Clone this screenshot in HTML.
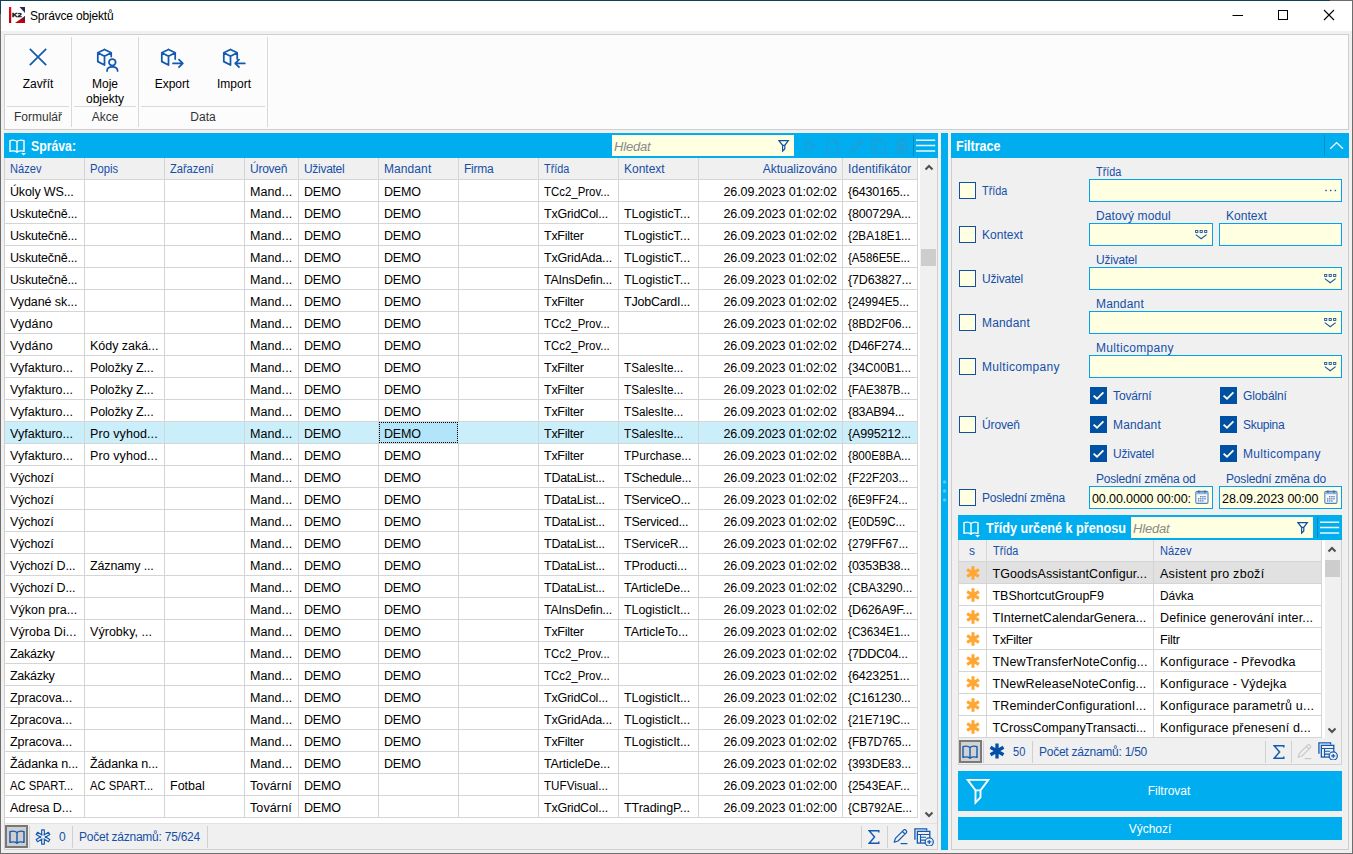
<!DOCTYPE html>
<html lang="cs"><head><meta charset="utf-8"><title>Správce objektů</title><style>
html,body{margin:0;padding:0;}
body{width:1353px;height:854px;overflow:hidden;position:relative;background:#f0f0f0;font-family:"Liberation Sans",sans-serif;font-size:12px;}
div,span,svg{position:absolute;}
.t{white-space:pre;}
</style></head><body>
<div style="left:0px;top:0px;width:1353px;height:31px;background:#fff;"></div>
<div style="left:0px;top:0px;width:1330px;height:1px;background:#0f4258;"></div>
<div style="left:1330px;top:0px;width:23px;height:1px;background:#6d6d6d;"></div>
<div style="left:0px;top:0px;width:1px;height:14px;background:#0f4258;"></div>
<div style="left:0px;top:14px;width:1px;height:840px;background:#6d6d6d;"></div>
<div style="left:1352px;top:1px;width:1px;height:853px;background:#6d6d6d;"></div>
<div style="left:0px;top:853px;width:1353px;height:1px;background:#6d6d6d;"></div>
<svg style="left:9px;top:7px;" width="16" height="16" viewBox="0 0 16 16">
<defs><linearGradient id="g1" x1="0" y1="0" x2="0" y2="1"><stop offset="0" stop-color="#ff0018"/><stop offset="1" stop-color="#b00010"/></linearGradient></defs>
<rect x="0" y="0" width="16" height="16" fill="#fff"/>
<rect x="0" y="0" width="2.2" height="16" fill="url(#g1)"/>
<polygon points="10.5,0 16,0 16,6" fill="#2a2a55"/>
<polygon points="16,9 16,16 6,16" fill="#c4000f"/>
<polygon points="16,9 16,13 12,13" fill="#3a2a50"/>
<text x="3.1" y="10.1" font-family="Liberation Sans" font-weight="bold" font-size="6.2" fill="#111" stroke="#111" stroke-width="0.35" textLength="9.8" lengthAdjust="spacingAndGlyphs">K2</text>
</svg>
<span class="t" style="top:9px;line-height:14px;font-size:12px;color:#000;letter-spacing:-0.171px;left:30px;">Správce objektů</span>
<svg style="left:1232px;top:9px;" width="12" height="12" viewBox="0 0 12 12"><path d="M0.5 6.5H11" stroke="#000" stroke-width="1" fill="none"/></svg>
<svg style="left:1277px;top:9px;" width="12" height="12" viewBox="0 0 12 12"><rect x="1.5" y="1.5" width="9" height="9" stroke="#000" stroke-width="1" fill="none"/></svg>
<svg style="left:1323px;top:9px;" width="12" height="12" viewBox="0 0 12 12"><path d="M1 1L11 11M11 1L1 11" stroke="#000" stroke-width="1.1" fill="none"/></svg>
<div style="left:4px;top:34px;width:1345px;height:96px;background:#fcfcfc;border:1px solid #cfcfcf;box-sizing:border-box;"></div>
<div style="left:71px;top:37px;width:1px;height:90px;background:#d9d9d9;"></div>
<div style="left:138px;top:37px;width:1px;height:90px;background:#d9d9d9;"></div>
<div style="left:267px;top:37px;width:1px;height:90px;background:#d9d9d9;"></div>
<div style="left:7px;top:106px;width:62px;height:1px;background:#d9d9d9;"></div>
<div style="left:74px;top:106px;width:62px;height:1px;background:#d9d9d9;"></div>
<div style="left:141px;top:106px;width:124px;height:1px;background:#d9d9d9;"></div>
<span class="t" style="top:110px;line-height:14px;font-size:12px;color:#333;left:-112px;width:300px;text-align:center;">Formulář</span>
<span class="t" style="top:110px;line-height:14px;font-size:12px;color:#333;left:-45px;width:300px;text-align:center;">Akce</span>
<span class="t" style="top:110px;line-height:14px;font-size:12px;color:#333;left:53px;width:300px;text-align:center;">Data</span>
<span class="t" style="top:77px;line-height:14px;font-size:12px;color:#000;left:-112px;width:300px;text-align:center;">Zavřít</span>
<span class="t" style="top:77px;line-height:14px;font-size:12px;color:#000;left:-45px;width:300px;text-align:center;">Moje</span>
<span class="t" style="top:92px;line-height:14px;font-size:12px;color:#000;left:-45px;width:300px;text-align:center;">objekty</span>
<span class="t" style="top:77px;line-height:14px;font-size:12px;color:#000;left:22px;width:300px;text-align:center;">Export</span>
<span class="t" style="top:77px;line-height:14px;font-size:12px;color:#000;left:84px;width:300px;text-align:center;">Import</span>
<svg style="left:27.6px;top:46.5px;" width="20" height="20" viewBox="0 0 20 20"><path d="M1.8 1.8L18.2 18.2M18.2 1.8L1.8 18.2" stroke="#1259b0" stroke-width="1.7" fill="none"/></svg>
<svg style="left:96.4px;top:47.5px;" width="24" height="24" viewBox="0 0 24 24"><g stroke="#1259b0" stroke-width="1.75" fill="none" stroke-linejoin="round" stroke-linecap="round"><path d="M8.5 1.5L15.2 4.8V8.5 M8.5 1.5L1.8 4.8V13.6L8.5 17 M1.8 4.8L8.5 8.2L15.2 4.8 M8.5 8.2V17"/><circle cx="16.3" cy="14.3" r="3.3"/><path d="M11 23C11.2 17.6 21.4 17.6 21.6 23"/></g></svg>
<svg style="left:159.5px;top:47.6px;" width="26" height="24" viewBox="0 0 26 24"><g stroke="#1259b0" stroke-width="1.75" fill="none" stroke-linejoin="round" stroke-linecap="round"><path d="M8.5 1.5L15.2 4.8V11 M8.5 1.5L1.8 4.8V13.6L8.5 17 M1.8 4.8L8.5 8.2L15.2 4.8 M8.5 8.2V17"/><path d="M13 15.4H22.6 M19 11.6L22.8 15.4L19 19.2"/></g></svg>
<svg style="left:221.5px;top:47.6px;" width="26" height="24" viewBox="0 0 26 24"><g stroke="#1259b0" stroke-width="1.75" fill="none" stroke-linejoin="round" stroke-linecap="round"><path d="M8.5 1.5L15.2 4.8V11 M8.5 1.5L1.8 4.8V13.6L8.5 17 M1.8 4.8L8.5 8.2L15.2 4.8 M8.5 8.2V17"/><path d="M13.2 15.4H22.8 M17 11.6L13.2 15.4L17 19.2"/></g></svg>
<div style="left:4px;top:133px;width:934px;height:717px;background:#fff;border:1px solid #d0d0d0;border-top:none;box-sizing:border-box;"></div>
<div style="left:4px;top:133px;width:934px;height:25px;background:#00adee;"></div>
<svg style="left:9px;top:139px;" width="18" height="18" viewBox="0 0 18 18"><g stroke="#fff" stroke-width="1.4" fill="none" stroke-linejoin="round"><path d="M8 2.6C6.5 1.2 3 1 1 1.6V12.4C3 11.8 6.5 12 8 13.2C9.5 12 13 11.8 15 12.4V1.6C13 1 9.5 1.2 8 2.6V13.2"/></g><path d="M12.2 14L17 14L14.6 16.4Z" fill="#fff"/></svg>
<span class="t" style="top:138px;line-height:16px;font-size:14px;color:#fff;font-weight:bold;transform:scaleX(0.8762);transform-origin:0 0;left:31px;">Správa:</span>
<div style="left:612px;top:135px;width:182px;height:21px;background:#ffffe1;"></div>
<span class="t" style="top:139px;line-height:15px;font-size:13px;color:#8a8a8a;font-style:italic;letter-spacing:-0.196px;left:614px;">Hledat</span>
<svg style="left:778px;top:139px;" width="12" height="14" viewBox="0 0 12 14"><path d="M0.9 1.7H10.3L6.8 6.3V10L4.6 12.1V6.3Z M4.6 6.3H6.8" stroke="#0f50a8" stroke-width="1.2" fill="none" stroke-linejoin="miter"/></svg>
<svg style="left:804px;top:138px;" width="14" height="16" viewBox="0 0 14 16"><path d="M1.8 2.2L10.6 7.8L1.8 13.4Z" stroke="#239cd3" stroke-width="1.2" fill="none"/></svg>
<svg style="left:826px;top:138px;" width="14" height="16" viewBox="0 0 14 16"><path d="M1.5 1.5H8.5L12 5V14.5H1.5Z M8.5 1.5V5H12" stroke="#239cd3" stroke-width="1.2" fill="none"/></svg>
<svg style="left:848px;top:138px;" width="16" height="16" viewBox="0 0 16 16"><path d="M2 14L3 10.5L11.5 2L14 4.5L5.5 13Z M10 3.5L12.5 6" stroke="#239cd3" stroke-width="1.2" fill="none"/></svg>
<svg style="left:870px;top:137px;" width="16" height="18" viewBox="0 0 16 18"><path d="M1.5 1.5H10V3.5 M1.5 1.5V13H5 M5.5 4H14.5V16.5H5.5Z" stroke="#239cd3" stroke-width="1.2" fill="none"/></svg>
<svg style="left:895px;top:137px;" width="14" height="18" viewBox="0 0 14 18"><path d="M1 4H13 M5 4V2H9V4 M2.2 4V16.5H11.8V4 M5.2 7V14 M7 7V14 M8.8 7V14" stroke="#239cd3" stroke-width="1.2" fill="none"/></svg>
<div style="left:913px;top:135px;width:1px;height:21px;background:#0a86bd;"></div>
<svg style="left:916px;top:139px;" width="20" height="14" viewBox="0 0 20 14"><path d="M0 1.3H19.2M0 6.6H19.2M0 11.9H19.2" stroke="#fff" stroke-opacity="0.92" stroke-width="1.5" fill="none"/></svg>
<div style="left:5px;top:158px;width:913px;height:21px;background:#f0f0f0;"></div>
<span class="t" style="top:162px;line-height:14px;font-size:12px;color:#154fa6;transform:scaleX(0.9260);transform-origin:0 0;left:10px;">Název</span>
<span class="t" style="top:162px;line-height:14px;font-size:12px;color:#154fa6;transform:scaleX(0.9357);transform-origin:0 0;left:90px;">Popis</span>
<span class="t" style="top:162px;line-height:14px;font-size:12px;color:#154fa6;transform:scaleX(0.9227);transform-origin:0 0;left:170px;">Zařazení</span>
<span class="t" style="top:162px;line-height:14px;font-size:12px;color:#154fa6;letter-spacing:-0.248px;left:250px;">Úroveň</span>
<span class="t" style="top:162px;line-height:14px;font-size:12px;color:#154fa6;letter-spacing:-0.298px;left:304px;">Uživatel</span>
<span class="t" style="top:162px;line-height:14px;font-size:12px;color:#154fa6;letter-spacing:0.085px;left:384px;">Mandant</span>
<span class="t" style="top:162px;line-height:14px;font-size:12px;color:#154fa6;letter-spacing:-0.274px;left:464px;">Firma</span>
<span class="t" style="top:162px;line-height:14px;font-size:12px;color:#154fa6;transform:scaleX(0.9066);transform-origin:0 0;left:544px;">Třída</span>
<span class="t" style="top:162px;line-height:14px;font-size:12px;color:#154fa6;letter-spacing:-0.015px;left:624px;">Kontext</span>
<span class="t" style="top:162px;line-height:14px;font-size:12px;color:#154fa6;letter-spacing:-0.040px;right:516px;">Aktualizováno</span>
<span class="t" style="top:162px;line-height:14px;font-size:12px;color:#154fa6;letter-spacing:0.104px;left:848px;">Identifikátor</span>
<div style="left:5px;top:422px;width:913px;height:21px;background:#cbeefb;"></div>
<div style="left:379px;top:422px;width:79px;height:21px;background:#b2e5fa;outline:1px dotted #000;outline-offset:-1px;"></div>
<div style="left:5px;top:179px;width:913px;height:1px;background:#d5d5d5;"></div>
<div style="left:5px;top:201px;width:913px;height:1px;background:#d5d5d5;"></div>
<div style="left:5px;top:223px;width:913px;height:1px;background:#d5d5d5;"></div>
<div style="left:5px;top:245px;width:913px;height:1px;background:#d5d5d5;"></div>
<div style="left:5px;top:267px;width:913px;height:1px;background:#d5d5d5;"></div>
<div style="left:5px;top:289px;width:913px;height:1px;background:#d5d5d5;"></div>
<div style="left:5px;top:311px;width:913px;height:1px;background:#d5d5d5;"></div>
<div style="left:5px;top:333px;width:913px;height:1px;background:#d5d5d5;"></div>
<div style="left:5px;top:355px;width:913px;height:1px;background:#d5d5d5;"></div>
<div style="left:5px;top:377px;width:913px;height:1px;background:#d5d5d5;"></div>
<div style="left:5px;top:399px;width:913px;height:1px;background:#d5d5d5;"></div>
<div style="left:5px;top:421px;width:913px;height:1px;background:#d5d5d5;"></div>
<div style="left:5px;top:443px;width:913px;height:1px;background:#d5d5d5;"></div>
<div style="left:5px;top:465px;width:913px;height:1px;background:#d5d5d5;"></div>
<div style="left:5px;top:487px;width:913px;height:1px;background:#d5d5d5;"></div>
<div style="left:5px;top:509px;width:913px;height:1px;background:#d5d5d5;"></div>
<div style="left:5px;top:531px;width:913px;height:1px;background:#d5d5d5;"></div>
<div style="left:5px;top:553px;width:913px;height:1px;background:#d5d5d5;"></div>
<div style="left:5px;top:575px;width:913px;height:1px;background:#d5d5d5;"></div>
<div style="left:5px;top:597px;width:913px;height:1px;background:#d5d5d5;"></div>
<div style="left:5px;top:619px;width:913px;height:1px;background:#d5d5d5;"></div>
<div style="left:5px;top:641px;width:913px;height:1px;background:#d5d5d5;"></div>
<div style="left:5px;top:663px;width:913px;height:1px;background:#d5d5d5;"></div>
<div style="left:5px;top:685px;width:913px;height:1px;background:#d5d5d5;"></div>
<div style="left:5px;top:707px;width:913px;height:1px;background:#d5d5d5;"></div>
<div style="left:5px;top:729px;width:913px;height:1px;background:#d5d5d5;"></div>
<div style="left:5px;top:751px;width:913px;height:1px;background:#d5d5d5;"></div>
<div style="left:5px;top:773px;width:913px;height:1px;background:#d5d5d5;"></div>
<div style="left:5px;top:795px;width:913px;height:1px;background:#d5d5d5;"></div>
<div style="left:5px;top:817px;width:913px;height:1px;background:#d5d5d5;"></div>
<div style="left:84px;top:158px;width:1px;height:660px;background:#d5d5d5;"></div>
<div style="left:164px;top:158px;width:1px;height:660px;background:#d5d5d5;"></div>
<div style="left:244px;top:158px;width:1px;height:660px;background:#d5d5d5;"></div>
<div style="left:298px;top:158px;width:1px;height:660px;background:#d5d5d5;"></div>
<div style="left:378px;top:158px;width:1px;height:660px;background:#d5d5d5;"></div>
<div style="left:458px;top:158px;width:1px;height:660px;background:#d5d5d5;"></div>
<div style="left:538px;top:158px;width:1px;height:660px;background:#d5d5d5;"></div>
<div style="left:618px;top:158px;width:1px;height:660px;background:#d5d5d5;"></div>
<div style="left:698px;top:158px;width:1px;height:660px;background:#d5d5d5;"></div>
<div style="left:842px;top:158px;width:1px;height:660px;background:#d5d5d5;"></div>
<div style="left:917px;top:158px;width:1px;height:660px;background:#d5d5d5;"></div>
<div style="left:458px;top:422px;width:1px;height:21px;background:#cbeefb;"></div>
<span class="t" style="top:185px;line-height:14px;font-size:12.5px;color:#000;letter-spacing:-0.154px;left:10px;">Úkoly WS...</span>
<span class="t" style="top:185px;line-height:14px;font-size:12.5px;color:#000;letter-spacing:0.087px;left:250px;">Mand...</span>
<span class="t" style="top:185px;line-height:14px;font-size:12.5px;color:#000;letter-spacing:-0.200px;left:304px;">DEMO</span>
<span class="t" style="top:185px;line-height:14px;font-size:12.5px;color:#000;letter-spacing:-0.200px;left:384px;">DEMO</span>
<span class="t" style="top:185px;line-height:14px;font-size:12.5px;color:#000;transform:scaleX(0.9137);transform-origin:0 0;left:544px;">TCc2_Prov...</span>
<span class="t" style="top:185px;line-height:14px;font-size:12.5px;color:#000;letter-spacing:-0.058px;right:516px;">26.09.2023 01:02:02</span>
<span class="t" style="top:185px;line-height:14px;font-size:12.5px;color:#000;letter-spacing:-0.165px;left:848px;">{6430165...</span>
<span class="t" style="top:207px;line-height:14px;font-size:12.5px;color:#000;letter-spacing:-0.182px;left:10px;">Uskutečně...</span>
<span class="t" style="top:207px;line-height:14px;font-size:12.5px;color:#000;letter-spacing:0.087px;left:250px;">Mand...</span>
<span class="t" style="top:207px;line-height:14px;font-size:12.5px;color:#000;letter-spacing:-0.200px;left:304px;">DEMO</span>
<span class="t" style="top:207px;line-height:14px;font-size:12.5px;color:#000;letter-spacing:-0.200px;left:384px;">DEMO</span>
<span class="t" style="top:207px;line-height:14px;font-size:12.5px;color:#000;letter-spacing:-0.232px;left:544px;">TxGridCol...</span>
<span class="t" style="top:207px;line-height:14px;font-size:12.5px;color:#000;letter-spacing:-0.045px;left:624px;">TLogisticT...</span>
<span class="t" style="top:207px;line-height:14px;font-size:12.5px;color:#000;letter-spacing:-0.058px;right:516px;">26.09.2023 01:02:02</span>
<span class="t" style="top:207px;line-height:14px;font-size:12.5px;color:#000;letter-spacing:-0.166px;left:848px;">{800729A...</span>
<span class="t" style="top:229px;line-height:14px;font-size:12.5px;color:#000;letter-spacing:-0.182px;left:10px;">Uskutečně...</span>
<span class="t" style="top:229px;line-height:14px;font-size:12.5px;color:#000;letter-spacing:0.087px;left:250px;">Mand...</span>
<span class="t" style="top:229px;line-height:14px;font-size:12.5px;color:#000;letter-spacing:-0.200px;left:304px;">DEMO</span>
<span class="t" style="top:229px;line-height:14px;font-size:12.5px;color:#000;letter-spacing:-0.200px;left:384px;">DEMO</span>
<span class="t" style="top:229px;line-height:14px;font-size:12.5px;color:#000;letter-spacing:-0.259px;left:544px;">TxFilter</span>
<span class="t" style="top:229px;line-height:14px;font-size:12.5px;color:#000;letter-spacing:-0.045px;left:624px;">TLogisticT...</span>
<span class="t" style="top:229px;line-height:14px;font-size:12.5px;color:#000;letter-spacing:-0.058px;right:516px;">26.09.2023 01:02:02</span>
<span class="t" style="top:229px;line-height:14px;font-size:12.5px;color:#000;transform:scaleX(0.9321);transform-origin:0 0;left:848px;">{2BA18E1...</span>
<span class="t" style="top:251px;line-height:14px;font-size:12.5px;color:#000;letter-spacing:-0.182px;left:10px;">Uskutečně...</span>
<span class="t" style="top:251px;line-height:14px;font-size:12.5px;color:#000;letter-spacing:0.087px;left:250px;">Mand...</span>
<span class="t" style="top:251px;line-height:14px;font-size:12.5px;color:#000;letter-spacing:-0.200px;left:304px;">DEMO</span>
<span class="t" style="top:251px;line-height:14px;font-size:12.5px;color:#000;letter-spacing:-0.200px;left:384px;">DEMO</span>
<span class="t" style="top:251px;line-height:14px;font-size:12.5px;color:#000;letter-spacing:-0.181px;left:544px;">TxGridAda...</span>
<span class="t" style="top:251px;line-height:14px;font-size:12.5px;color:#000;letter-spacing:-0.045px;left:624px;">TLogisticT...</span>
<span class="t" style="top:251px;line-height:14px;font-size:12.5px;color:#000;letter-spacing:-0.058px;right:516px;">26.09.2023 01:02:02</span>
<span class="t" style="top:251px;line-height:14px;font-size:12.5px;color:#000;transform:scaleX(0.9192);transform-origin:0 0;left:848px;">{A586E5E...</span>
<span class="t" style="top:273px;line-height:14px;font-size:12.5px;color:#000;letter-spacing:-0.182px;left:10px;">Uskutečně...</span>
<span class="t" style="top:273px;line-height:14px;font-size:12.5px;color:#000;letter-spacing:0.087px;left:250px;">Mand...</span>
<span class="t" style="top:273px;line-height:14px;font-size:12.5px;color:#000;letter-spacing:-0.200px;left:304px;">DEMO</span>
<span class="t" style="top:273px;line-height:14px;font-size:12.5px;color:#000;letter-spacing:-0.200px;left:384px;">DEMO</span>
<span class="t" style="top:273px;line-height:14px;font-size:12.5px;color:#000;letter-spacing:-0.256px;left:544px;">TAInsDefin...</span>
<span class="t" style="top:273px;line-height:14px;font-size:12.5px;color:#000;letter-spacing:-0.045px;left:624px;">TLogisticT...</span>
<span class="t" style="top:273px;line-height:14px;font-size:12.5px;color:#000;letter-spacing:-0.058px;right:516px;">26.09.2023 01:02:02</span>
<span class="t" style="top:273px;line-height:14px;font-size:12.5px;color:#000;letter-spacing:-0.162px;left:848px;">{7D63827...</span>
<span class="t" style="top:295px;line-height:14px;font-size:12.5px;color:#000;letter-spacing:-0.086px;left:10px;">Vydané sk...</span>
<span class="t" style="top:295px;line-height:14px;font-size:12.5px;color:#000;letter-spacing:0.087px;left:250px;">Mand...</span>
<span class="t" style="top:295px;line-height:14px;font-size:12.5px;color:#000;letter-spacing:-0.200px;left:304px;">DEMO</span>
<span class="t" style="top:295px;line-height:14px;font-size:12.5px;color:#000;letter-spacing:-0.200px;left:384px;">DEMO</span>
<span class="t" style="top:295px;line-height:14px;font-size:12.5px;color:#000;letter-spacing:-0.259px;left:544px;">TxFilter</span>
<span class="t" style="top:295px;line-height:14px;font-size:12.5px;color:#000;letter-spacing:-0.223px;left:624px;">TJobCardI...</span>
<span class="t" style="top:295px;line-height:14px;font-size:12.5px;color:#000;letter-spacing:-0.058px;right:516px;">26.09.2023 01:02:02</span>
<span class="t" style="top:295px;line-height:14px;font-size:12.5px;color:#000;transform:scaleX(0.9438);transform-origin:0 0;left:848px;">{24994E5...</span>
<span class="t" style="top:317px;line-height:14px;font-size:12.5px;color:#000;letter-spacing:0.160px;left:10px;">Vydáno</span>
<span class="t" style="top:317px;line-height:14px;font-size:12.5px;color:#000;letter-spacing:0.087px;left:250px;">Mand...</span>
<span class="t" style="top:317px;line-height:14px;font-size:12.5px;color:#000;letter-spacing:-0.200px;left:304px;">DEMO</span>
<span class="t" style="top:317px;line-height:14px;font-size:12.5px;color:#000;letter-spacing:-0.200px;left:384px;">DEMO</span>
<span class="t" style="top:317px;line-height:14px;font-size:12.5px;color:#000;transform:scaleX(0.9137);transform-origin:0 0;left:544px;">TCc2_Prov...</span>
<span class="t" style="top:317px;line-height:14px;font-size:12.5px;color:#000;letter-spacing:-0.058px;right:516px;">26.09.2023 01:02:02</span>
<span class="t" style="top:317px;line-height:14px;font-size:12.5px;color:#000;transform:scaleX(0.9396);transform-origin:0 0;left:848px;">{8BD2F06...</span>
<span class="t" style="top:339px;line-height:14px;font-size:12.5px;color:#000;letter-spacing:0.160px;left:10px;">Vydáno</span>
<span class="t" style="top:339px;line-height:14px;font-size:12.5px;color:#000;letter-spacing:-0.033px;left:90px;">Kódy zaká...</span>
<span class="t" style="top:339px;line-height:14px;font-size:12.5px;color:#000;letter-spacing:0.087px;left:250px;">Mand...</span>
<span class="t" style="top:339px;line-height:14px;font-size:12.5px;color:#000;letter-spacing:-0.200px;left:304px;">DEMO</span>
<span class="t" style="top:339px;line-height:14px;font-size:12.5px;color:#000;letter-spacing:-0.200px;left:384px;">DEMO</span>
<span class="t" style="top:339px;line-height:14px;font-size:12.5px;color:#000;transform:scaleX(0.9137);transform-origin:0 0;left:544px;">TCc2_Prov...</span>
<span class="t" style="top:339px;line-height:14px;font-size:12.5px;color:#000;letter-spacing:-0.058px;right:516px;">26.09.2023 01:02:02</span>
<span class="t" style="top:339px;line-height:14px;font-size:12.5px;color:#000;letter-spacing:-0.284px;left:848px;">{D46F274...</span>
<span class="t" style="top:361px;line-height:14px;font-size:12.5px;color:#000;letter-spacing:0.028px;left:10px;">Vyfakturo...</span>
<span class="t" style="top:361px;line-height:14px;font-size:12.5px;color:#000;letter-spacing:-0.150px;left:90px;">Položky Z...</span>
<span class="t" style="top:361px;line-height:14px;font-size:12.5px;color:#000;letter-spacing:0.087px;left:250px;">Mand...</span>
<span class="t" style="top:361px;line-height:14px;font-size:12.5px;color:#000;letter-spacing:-0.200px;left:304px;">DEMO</span>
<span class="t" style="top:361px;line-height:14px;font-size:12.5px;color:#000;letter-spacing:-0.200px;left:384px;">DEMO</span>
<span class="t" style="top:361px;line-height:14px;font-size:12.5px;color:#000;letter-spacing:-0.259px;left:544px;">TxFilter</span>
<span class="t" style="top:361px;line-height:14px;font-size:12.5px;color:#000;transform:scaleX(0.9362);transform-origin:0 0;left:624px;">TSalesIte...</span>
<span class="t" style="top:361px;line-height:14px;font-size:12.5px;color:#000;letter-spacing:-0.058px;right:516px;">26.09.2023 01:02:02</span>
<span class="t" style="top:361px;line-height:14px;font-size:12.5px;color:#000;transform:scaleX(0.9433);transform-origin:0 0;left:848px;">{34C00B1...</span>
<span class="t" style="top:383px;line-height:14px;font-size:12.5px;color:#000;letter-spacing:0.028px;left:10px;">Vyfakturo...</span>
<span class="t" style="top:383px;line-height:14px;font-size:12.5px;color:#000;letter-spacing:-0.150px;left:90px;">Položky Z...</span>
<span class="t" style="top:383px;line-height:14px;font-size:12.5px;color:#000;letter-spacing:0.087px;left:250px;">Mand...</span>
<span class="t" style="top:383px;line-height:14px;font-size:12.5px;color:#000;letter-spacing:-0.200px;left:304px;">DEMO</span>
<span class="t" style="top:383px;line-height:14px;font-size:12.5px;color:#000;letter-spacing:-0.200px;left:384px;">DEMO</span>
<span class="t" style="top:383px;line-height:14px;font-size:12.5px;color:#000;letter-spacing:-0.259px;left:544px;">TxFilter</span>
<span class="t" style="top:383px;line-height:14px;font-size:12.5px;color:#000;transform:scaleX(0.9362);transform-origin:0 0;left:624px;">TSalesIte...</span>
<span class="t" style="top:383px;line-height:14px;font-size:12.5px;color:#000;letter-spacing:-0.058px;right:516px;">26.09.2023 01:02:02</span>
<span class="t" style="top:383px;line-height:14px;font-size:12.5px;color:#000;transform:scaleX(0.9222);transform-origin:0 0;left:848px;">{FAE387B...</span>
<span class="t" style="top:405px;line-height:14px;font-size:12.5px;color:#000;letter-spacing:0.028px;left:10px;">Vyfakturo...</span>
<span class="t" style="top:405px;line-height:14px;font-size:12.5px;color:#000;letter-spacing:-0.150px;left:90px;">Položky Z...</span>
<span class="t" style="top:405px;line-height:14px;font-size:12.5px;color:#000;letter-spacing:0.087px;left:250px;">Mand...</span>
<span class="t" style="top:405px;line-height:14px;font-size:12.5px;color:#000;letter-spacing:-0.200px;left:304px;">DEMO</span>
<span class="t" style="top:405px;line-height:14px;font-size:12.5px;color:#000;letter-spacing:-0.200px;left:384px;">DEMO</span>
<span class="t" style="top:405px;line-height:14px;font-size:12.5px;color:#000;letter-spacing:-0.259px;left:544px;">TxFilter</span>
<span class="t" style="top:405px;line-height:14px;font-size:12.5px;color:#000;transform:scaleX(0.9362);transform-origin:0 0;left:624px;">TSalesIte...</span>
<span class="t" style="top:405px;line-height:14px;font-size:12.5px;color:#000;letter-spacing:-0.058px;right:516px;">26.09.2023 01:02:02</span>
<span class="t" style="top:405px;line-height:14px;font-size:12.5px;color:#000;letter-spacing:-0.281px;left:848px;">{83AB94...</span>
<span class="t" style="top:427px;line-height:14px;font-size:12.5px;color:#000;letter-spacing:0.028px;left:10px;">Vyfakturo...</span>
<span class="t" style="top:427px;line-height:14px;font-size:12.5px;color:#000;letter-spacing:0.083px;left:90px;">Pro vyhod...</span>
<span class="t" style="top:427px;line-height:14px;font-size:12.5px;color:#000;letter-spacing:0.087px;left:250px;">Mand...</span>
<span class="t" style="top:427px;line-height:14px;font-size:12.5px;color:#000;letter-spacing:-0.200px;left:304px;">DEMO</span>
<span class="t" style="top:427px;line-height:14px;font-size:12.5px;color:#000;letter-spacing:-0.200px;left:384px;">DEMO</span>
<span class="t" style="top:427px;line-height:14px;font-size:12.5px;color:#000;letter-spacing:-0.259px;left:544px;">TxFilter</span>
<span class="t" style="top:427px;line-height:14px;font-size:12.5px;color:#000;transform:scaleX(0.9362);transform-origin:0 0;left:624px;">TSalesIte...</span>
<span class="t" style="top:427px;line-height:14px;font-size:12.5px;color:#000;letter-spacing:-0.058px;right:516px;">26.09.2023 01:02:02</span>
<span class="t" style="top:427px;line-height:14px;font-size:12.5px;color:#000;letter-spacing:-0.166px;left:848px;">{A995212...</span>
<span class="t" style="top:449px;line-height:14px;font-size:12.5px;color:#000;letter-spacing:0.028px;left:10px;">Vyfakturo...</span>
<span class="t" style="top:449px;line-height:14px;font-size:12.5px;color:#000;letter-spacing:0.083px;left:90px;">Pro vyhod...</span>
<span class="t" style="top:449px;line-height:14px;font-size:12.5px;color:#000;letter-spacing:0.087px;left:250px;">Mand...</span>
<span class="t" style="top:449px;line-height:14px;font-size:12.5px;color:#000;letter-spacing:-0.200px;left:304px;">DEMO</span>
<span class="t" style="top:449px;line-height:14px;font-size:12.5px;color:#000;letter-spacing:-0.200px;left:384px;">DEMO</span>
<span class="t" style="top:449px;line-height:14px;font-size:12.5px;color:#000;letter-spacing:-0.259px;left:544px;">TxFilter</span>
<span class="t" style="top:449px;line-height:14px;font-size:12.5px;color:#000;transform:scaleX(0.9481);transform-origin:0 0;left:624px;">TPurchase...</span>
<span class="t" style="top:449px;line-height:14px;font-size:12.5px;color:#000;letter-spacing:-0.058px;right:516px;">26.09.2023 01:02:02</span>
<span class="t" style="top:449px;line-height:14px;font-size:12.5px;color:#000;transform:scaleX(0.9321);transform-origin:0 0;left:848px;">{800E8BA...</span>
<span class="t" style="top:471px;line-height:14px;font-size:12.5px;color:#000;letter-spacing:-0.124px;left:10px;">Výchozí</span>
<span class="t" style="top:471px;line-height:14px;font-size:12.5px;color:#000;letter-spacing:0.087px;left:250px;">Mand...</span>
<span class="t" style="top:471px;line-height:14px;font-size:12.5px;color:#000;letter-spacing:-0.200px;left:304px;">DEMO</span>
<span class="t" style="top:471px;line-height:14px;font-size:12.5px;color:#000;letter-spacing:-0.200px;left:384px;">DEMO</span>
<span class="t" style="top:471px;line-height:14px;font-size:12.5px;color:#000;letter-spacing:-0.260px;left:544px;">TDataList...</span>
<span class="t" style="top:471px;line-height:14px;font-size:12.5px;color:#000;letter-spacing:-0.249px;left:624px;">TSchedule...</span>
<span class="t" style="top:471px;line-height:14px;font-size:12.5px;color:#000;letter-spacing:-0.058px;right:516px;">26.09.2023 01:02:02</span>
<span class="t" style="top:471px;line-height:14px;font-size:12.5px;color:#000;transform:scaleX(0.9304);transform-origin:0 0;left:848px;">{F22F203...</span>
<span class="t" style="top:493px;line-height:14px;font-size:12.5px;color:#000;letter-spacing:-0.124px;left:10px;">Výchozí</span>
<span class="t" style="top:493px;line-height:14px;font-size:12.5px;color:#000;letter-spacing:0.087px;left:250px;">Mand...</span>
<span class="t" style="top:493px;line-height:14px;font-size:12.5px;color:#000;letter-spacing:-0.200px;left:304px;">DEMO</span>
<span class="t" style="top:493px;line-height:14px;font-size:12.5px;color:#000;letter-spacing:-0.200px;left:384px;">DEMO</span>
<span class="t" style="top:493px;line-height:14px;font-size:12.5px;color:#000;letter-spacing:-0.260px;left:544px;">TDataList...</span>
<span class="t" style="top:493px;line-height:14px;font-size:12.5px;color:#000;letter-spacing:-0.281px;left:624px;">TServiceO...</span>
<span class="t" style="top:493px;line-height:14px;font-size:12.5px;color:#000;letter-spacing:-0.058px;right:516px;">26.09.2023 01:02:02</span>
<span class="t" style="top:493px;line-height:14px;font-size:12.5px;color:#000;transform:scaleX(0.9043);transform-origin:0 0;left:848px;">{6E9FF24...</span>
<span class="t" style="top:515px;line-height:14px;font-size:12.5px;color:#000;letter-spacing:-0.124px;left:10px;">Výchozí</span>
<span class="t" style="top:515px;line-height:14px;font-size:12.5px;color:#000;letter-spacing:0.087px;left:250px;">Mand...</span>
<span class="t" style="top:515px;line-height:14px;font-size:12.5px;color:#000;letter-spacing:-0.200px;left:304px;">DEMO</span>
<span class="t" style="top:515px;line-height:14px;font-size:12.5px;color:#000;letter-spacing:-0.200px;left:384px;">DEMO</span>
<span class="t" style="top:515px;line-height:14px;font-size:12.5px;color:#000;letter-spacing:-0.260px;left:544px;">TDataList...</span>
<span class="t" style="top:515px;line-height:14px;font-size:12.5px;color:#000;letter-spacing:-0.207px;left:624px;">TServiced...</span>
<span class="t" style="top:515px;line-height:14px;font-size:12.5px;color:#000;letter-spacing:-0.058px;right:516px;">26.09.2023 01:02:02</span>
<span class="t" style="top:515px;line-height:14px;font-size:12.5px;color:#000;transform:scaleX(0.9243);transform-origin:0 0;left:848px;">{E0D59C...</span>
<span class="t" style="top:537px;line-height:14px;font-size:12.5px;color:#000;letter-spacing:-0.124px;left:10px;">Výchozí</span>
<span class="t" style="top:537px;line-height:14px;font-size:12.5px;color:#000;letter-spacing:0.087px;left:250px;">Mand...</span>
<span class="t" style="top:537px;line-height:14px;font-size:12.5px;color:#000;letter-spacing:-0.200px;left:304px;">DEMO</span>
<span class="t" style="top:537px;line-height:14px;font-size:12.5px;color:#000;letter-spacing:-0.200px;left:384px;">DEMO</span>
<span class="t" style="top:537px;line-height:14px;font-size:12.5px;color:#000;letter-spacing:-0.260px;left:544px;">TDataList...</span>
<span class="t" style="top:537px;line-height:14px;font-size:12.5px;color:#000;transform:scaleX(0.9336);transform-origin:0 0;left:624px;">TServiceR...</span>
<span class="t" style="top:537px;line-height:14px;font-size:12.5px;color:#000;letter-spacing:-0.058px;right:516px;">26.09.2023 01:02:02</span>
<span class="t" style="top:537px;line-height:14px;font-size:12.5px;color:#000;transform:scaleX(0.9304);transform-origin:0 0;left:848px;">{279FF67...</span>
<span class="t" style="top:559px;line-height:14px;font-size:12.5px;color:#000;letter-spacing:-0.174px;left:10px;">Výchozí D...</span>
<span class="t" style="top:559px;line-height:14px;font-size:12.5px;color:#000;letter-spacing:-0.154px;left:90px;">Záznamy ...</span>
<span class="t" style="top:559px;line-height:14px;font-size:12.5px;color:#000;letter-spacing:0.087px;left:250px;">Mand...</span>
<span class="t" style="top:559px;line-height:14px;font-size:12.5px;color:#000;letter-spacing:-0.200px;left:304px;">DEMO</span>
<span class="t" style="top:559px;line-height:14px;font-size:12.5px;color:#000;letter-spacing:-0.200px;left:384px;">DEMO</span>
<span class="t" style="top:559px;line-height:14px;font-size:12.5px;color:#000;letter-spacing:-0.260px;left:544px;">TDataList...</span>
<span class="t" style="top:559px;line-height:14px;font-size:12.5px;color:#000;letter-spacing:-0.060px;left:624px;">TProducti...</span>
<span class="t" style="top:559px;line-height:14px;font-size:12.5px;color:#000;letter-spacing:-0.058px;right:516px;">26.09.2023 01:02:02</span>
<span class="t" style="top:559px;line-height:14px;font-size:12.5px;color:#000;letter-spacing:-0.251px;left:848px;">{0353B38...</span>
<span class="t" style="top:581px;line-height:14px;font-size:12.5px;color:#000;letter-spacing:-0.174px;left:10px;">Výchozí D...</span>
<span class="t" style="top:581px;line-height:14px;font-size:12.5px;color:#000;letter-spacing:0.087px;left:250px;">Mand...</span>
<span class="t" style="top:581px;line-height:14px;font-size:12.5px;color:#000;letter-spacing:-0.200px;left:304px;">DEMO</span>
<span class="t" style="top:581px;line-height:14px;font-size:12.5px;color:#000;letter-spacing:-0.200px;left:384px;">DEMO</span>
<span class="t" style="top:581px;line-height:14px;font-size:12.5px;color:#000;letter-spacing:-0.260px;left:544px;">TDataList...</span>
<span class="t" style="top:581px;line-height:14px;font-size:12.5px;color:#000;letter-spacing:-0.142px;left:624px;">TArticleDe...</span>
<span class="t" style="top:581px;line-height:14px;font-size:12.5px;color:#000;letter-spacing:-0.058px;right:516px;">26.09.2023 01:02:02</span>
<span class="t" style="top:581px;line-height:14px;font-size:12.5px;color:#000;transform:scaleX(0.9442);transform-origin:0 0;left:848px;">{CBA3290...</span>
<span class="t" style="top:603px;line-height:14px;font-size:12.5px;color:#000;letter-spacing:0.050px;left:10px;">Výkon pra...</span>
<span class="t" style="top:603px;line-height:14px;font-size:12.5px;color:#000;letter-spacing:0.087px;left:250px;">Mand...</span>
<span class="t" style="top:603px;line-height:14px;font-size:12.5px;color:#000;letter-spacing:-0.200px;left:304px;">DEMO</span>
<span class="t" style="top:603px;line-height:14px;font-size:12.5px;color:#000;letter-spacing:-0.200px;left:384px;">DEMO</span>
<span class="t" style="top:603px;line-height:14px;font-size:12.5px;color:#000;letter-spacing:-0.256px;left:544px;">TAInsDefin...</span>
<span class="t" style="top:603px;line-height:14px;font-size:12.5px;color:#000;letter-spacing:-0.092px;left:624px;">TLogisticIt...</span>
<span class="t" style="top:603px;line-height:14px;font-size:12.5px;color:#000;letter-spacing:-0.058px;right:516px;">26.09.2023 01:02:02</span>
<span class="t" style="top:603px;line-height:14px;font-size:12.5px;color:#000;letter-spacing:-0.159px;left:848px;">{D626A9F...</span>
<span class="t" style="top:625px;line-height:14px;font-size:12.5px;color:#000;letter-spacing:0.099px;left:10px;">Výroba Di...</span>
<span class="t" style="top:625px;line-height:14px;font-size:12.5px;color:#000;letter-spacing:0.042px;left:90px;">Výrobky, ...</span>
<span class="t" style="top:625px;line-height:14px;font-size:12.5px;color:#000;letter-spacing:0.087px;left:250px;">Mand...</span>
<span class="t" style="top:625px;line-height:14px;font-size:12.5px;color:#000;letter-spacing:-0.200px;left:304px;">DEMO</span>
<span class="t" style="top:625px;line-height:14px;font-size:12.5px;color:#000;letter-spacing:-0.200px;left:384px;">DEMO</span>
<span class="t" style="top:625px;line-height:14px;font-size:12.5px;color:#000;letter-spacing:-0.259px;left:544px;">TxFilter</span>
<span class="t" style="top:625px;line-height:14px;font-size:12.5px;color:#000;letter-spacing:-0.066px;left:624px;">TArticleTo...</span>
<span class="t" style="top:625px;line-height:14px;font-size:12.5px;color:#000;letter-spacing:-0.058px;right:516px;">26.09.2023 01:02:02</span>
<span class="t" style="top:625px;line-height:14px;font-size:12.5px;color:#000;transform:scaleX(0.9302);transform-origin:0 0;left:848px;">{C3634E1...</span>
<span class="t" style="top:647px;line-height:14px;font-size:12.5px;color:#000;letter-spacing:-0.278px;left:10px;">Zakázky</span>
<span class="t" style="top:647px;line-height:14px;font-size:12.5px;color:#000;letter-spacing:0.087px;left:250px;">Mand...</span>
<span class="t" style="top:647px;line-height:14px;font-size:12.5px;color:#000;letter-spacing:-0.200px;left:304px;">DEMO</span>
<span class="t" style="top:647px;line-height:14px;font-size:12.5px;color:#000;letter-spacing:-0.200px;left:384px;">DEMO</span>
<span class="t" style="top:647px;line-height:14px;font-size:12.5px;color:#000;transform:scaleX(0.9137);transform-origin:0 0;left:544px;">TCc2_Prov...</span>
<span class="t" style="top:647px;line-height:14px;font-size:12.5px;color:#000;letter-spacing:-0.058px;right:516px;">26.09.2023 01:02:02</span>
<span class="t" style="top:647px;line-height:14px;font-size:12.5px;color:#000;letter-spacing:-0.284px;left:848px;">{7DDC04...</span>
<span class="t" style="top:669px;line-height:14px;font-size:12.5px;color:#000;letter-spacing:-0.278px;left:10px;">Zakázky</span>
<span class="t" style="top:669px;line-height:14px;font-size:12.5px;color:#000;letter-spacing:0.087px;left:250px;">Mand...</span>
<span class="t" style="top:669px;line-height:14px;font-size:12.5px;color:#000;letter-spacing:-0.200px;left:304px;">DEMO</span>
<span class="t" style="top:669px;line-height:14px;font-size:12.5px;color:#000;letter-spacing:-0.200px;left:384px;">DEMO</span>
<span class="t" style="top:669px;line-height:14px;font-size:12.5px;color:#000;transform:scaleX(0.9137);transform-origin:0 0;left:544px;">TCc2_Prov...</span>
<span class="t" style="top:669px;line-height:14px;font-size:12.5px;color:#000;letter-spacing:-0.058px;right:516px;">26.09.2023 01:02:02</span>
<span class="t" style="top:669px;line-height:14px;font-size:12.5px;color:#000;letter-spacing:-0.165px;left:848px;">{6423251...</span>
<span class="t" style="top:691px;line-height:14px;font-size:12.5px;color:#000;letter-spacing:-0.039px;left:10px;">Zpracova...</span>
<span class="t" style="top:691px;line-height:14px;font-size:12.5px;color:#000;letter-spacing:0.087px;left:250px;">Mand...</span>
<span class="t" style="top:691px;line-height:14px;font-size:12.5px;color:#000;letter-spacing:-0.200px;left:304px;">DEMO</span>
<span class="t" style="top:691px;line-height:14px;font-size:12.5px;color:#000;letter-spacing:-0.200px;left:384px;">DEMO</span>
<span class="t" style="top:691px;line-height:14px;font-size:12.5px;color:#000;letter-spacing:-0.232px;left:544px;">TxGridCol...</span>
<span class="t" style="top:691px;line-height:14px;font-size:12.5px;color:#000;letter-spacing:-0.092px;left:624px;">TLogisticIt...</span>
<span class="t" style="top:691px;line-height:14px;font-size:12.5px;color:#000;letter-spacing:-0.058px;right:516px;">26.09.2023 01:02:02</span>
<span class="t" style="top:691px;line-height:14px;font-size:12.5px;color:#000;letter-spacing:-0.259px;left:848px;">{C161230...</span>
<span class="t" style="top:713px;line-height:14px;font-size:12.5px;color:#000;letter-spacing:-0.039px;left:10px;">Zpracova...</span>
<span class="t" style="top:713px;line-height:14px;font-size:12.5px;color:#000;letter-spacing:0.087px;left:250px;">Mand...</span>
<span class="t" style="top:713px;line-height:14px;font-size:12.5px;color:#000;letter-spacing:-0.200px;left:304px;">DEMO</span>
<span class="t" style="top:713px;line-height:14px;font-size:12.5px;color:#000;letter-spacing:-0.200px;left:384px;">DEMO</span>
<span class="t" style="top:713px;line-height:14px;font-size:12.5px;color:#000;letter-spacing:-0.181px;left:544px;">TxGridAda...</span>
<span class="t" style="top:713px;line-height:14px;font-size:12.5px;color:#000;letter-spacing:-0.092px;left:624px;">TLogisticIt...</span>
<span class="t" style="top:713px;line-height:14px;font-size:12.5px;color:#000;letter-spacing:-0.058px;right:516px;">26.09.2023 01:02:02</span>
<span class="t" style="top:713px;line-height:14px;font-size:12.5px;color:#000;transform:scaleX(0.9302);transform-origin:0 0;left:848px;">{21E719C...</span>
<span class="t" style="top:735px;line-height:14px;font-size:12.5px;color:#000;letter-spacing:-0.039px;left:10px;">Zpracova...</span>
<span class="t" style="top:735px;line-height:14px;font-size:12.5px;color:#000;letter-spacing:0.087px;left:250px;">Mand...</span>
<span class="t" style="top:735px;line-height:14px;font-size:12.5px;color:#000;letter-spacing:-0.200px;left:304px;">DEMO</span>
<span class="t" style="top:735px;line-height:14px;font-size:12.5px;color:#000;letter-spacing:-0.200px;left:384px;">DEMO</span>
<span class="t" style="top:735px;line-height:14px;font-size:12.5px;color:#000;letter-spacing:-0.259px;left:544px;">TxFilter</span>
<span class="t" style="top:735px;line-height:14px;font-size:12.5px;color:#000;letter-spacing:-0.092px;left:624px;">TLogisticIt...</span>
<span class="t" style="top:735px;line-height:14px;font-size:12.5px;color:#000;letter-spacing:-0.058px;right:516px;">26.09.2023 01:02:02</span>
<span class="t" style="top:735px;line-height:14px;font-size:12.5px;color:#000;transform:scaleX(0.9396);transform-origin:0 0;left:848px;">{FB7D765...</span>
<span class="t" style="top:757px;line-height:14px;font-size:12.5px;color:#000;letter-spacing:-0.108px;left:10px;">Žádanka n...</span>
<span class="t" style="top:757px;line-height:14px;font-size:12.5px;color:#000;letter-spacing:-0.108px;left:90px;">Žádanka n...</span>
<span class="t" style="top:757px;line-height:14px;font-size:12.5px;color:#000;letter-spacing:0.087px;left:250px;">Mand...</span>
<span class="t" style="top:757px;line-height:14px;font-size:12.5px;color:#000;letter-spacing:-0.200px;left:304px;">DEMO</span>
<span class="t" style="top:757px;line-height:14px;font-size:12.5px;color:#000;letter-spacing:-0.200px;left:384px;">DEMO</span>
<span class="t" style="top:757px;line-height:14px;font-size:12.5px;color:#000;letter-spacing:-0.142px;left:544px;">TArticleDe...</span>
<span class="t" style="top:757px;line-height:14px;font-size:12.5px;color:#000;letter-spacing:-0.058px;right:516px;">26.09.2023 01:02:02</span>
<span class="t" style="top:757px;line-height:14px;font-size:12.5px;color:#000;transform:scaleX(0.9462);transform-origin:0 0;left:848px;">{393DE83...</span>
<span class="t" style="top:779px;line-height:14px;font-size:12.5px;color:#000;transform:scaleX(0.8976);transform-origin:0 0;left:10px;">AC SPART...</span>
<span class="t" style="top:779px;line-height:14px;font-size:12.5px;color:#000;transform:scaleX(0.8976);transform-origin:0 0;left:90px;">AC SPART...</span>
<span class="t" style="top:779px;line-height:14px;font-size:12.5px;color:#000;left:170px;">Fotbal</span>
<span class="t" style="top:779px;line-height:14px;font-size:12.5px;color:#000;letter-spacing:0.114px;left:250px;">Tovární</span>
<span class="t" style="top:779px;line-height:14px;font-size:12.5px;color:#000;letter-spacing:-0.200px;left:304px;">DEMO</span>
<span class="t" style="top:779px;line-height:14px;font-size:12.5px;color:#000;transform:scaleX(0.9322);transform-origin:0 0;left:544px;">TUFVisual...</span>
<span class="t" style="top:779px;line-height:14px;font-size:12.5px;color:#000;letter-spacing:-0.058px;right:516px;">26.09.2023 01:02:00</span>
<span class="t" style="top:779px;line-height:14px;font-size:12.5px;color:#000;transform:scaleX(0.9450);transform-origin:0 0;left:848px;">{2543EAF...</span>
<span class="t" style="top:801px;line-height:14px;font-size:12.5px;color:#000;letter-spacing:-0.039px;left:10px;">Adresa D...</span>
<span class="t" style="top:801px;line-height:14px;font-size:12.5px;color:#000;letter-spacing:0.114px;left:250px;">Tovární</span>
<span class="t" style="top:801px;line-height:14px;font-size:12.5px;color:#000;letter-spacing:-0.200px;left:304px;">DEMO</span>
<span class="t" style="top:801px;line-height:14px;font-size:12.5px;color:#000;letter-spacing:-0.232px;left:544px;">TxGridCol...</span>
<span class="t" style="top:801px;line-height:14px;font-size:12.5px;color:#000;letter-spacing:-0.059px;left:624px;">TTradingP...</span>
<span class="t" style="top:801px;line-height:14px;font-size:12.5px;color:#000;letter-spacing:-0.058px;right:516px;">26.09.2023 01:02:00</span>
<span class="t" style="top:801px;line-height:14px;font-size:12.5px;color:#000;transform:scaleX(0.9192);transform-origin:0 0;left:848px;">{CB792AE...</span>
<div style="left:920px;top:158px;width:17px;height:665px;background:#f0f0f0;"></div>
<svg style="left:924px;top:163px;" width="10" height="8" viewBox="0 0 10 8"><path d="M1.5 6.4L5 2.9L8.5 6.4" stroke="#505050" stroke-width="2.1" fill="none"/></svg>
<svg style="left:923.6px;top:811.4px;" width="10" height="8" viewBox="0 0 10 8"><path d="M1.5 1.6L5 5.1L8.5 1.6" stroke="#505050" stroke-width="2.1" fill="none"/></svg>
<div style="left:921px;top:249px;width:15px;height:17px;background:#cdcdcd;"></div>
<div style="left:5px;top:823px;width:932px;height:26px;background:#f0f0f0;"></div>
<div style="left:5px;top:823px;width:932px;height:1px;background:#e2e2e2;"></div>
<div style="left:207px;top:826px;width:1px;height:22px;background:#d0d0d0;"></div>
<div style="left:5px;top:825px;width:23px;height:23px;background:#cfcfcf;border:2px solid #787878;box-sizing:border-box;"></div>
<svg style="left:8.6px;top:830px;" width="18" height="18" viewBox="0 0 18 18"><g stroke="#1259b0" stroke-width="1.4" fill="none" stroke-linejoin="round"><path d="M8 2.6C6.5 1.2 3 1 1 1.6V12.4C3 11.8 6.5 12 8 13.2C9.5 12 13 11.8 15 12.4V1.6C13 1 9.5 1.2 8 2.6V13.2"/></g></svg>
<div style="left:29px;top:826px;width:1px;height:22px;background:#d0d0d0;"></div>
<div style="left:72px;top:826px;width:1px;height:22px;background:#d0d0d0;"></div>
<svg style="left:34.6px;top:828.5px;" width="16" height="16" viewBox="0 0 16 16"><path d="M6.65 9.40L6.65 15.10L9.35 15.10L9.35 9.40M6.11 7.53L1.18 10.38L2.53 12.72L7.46 9.87M7.46 6.13L2.53 3.28L1.18 5.62L6.11 8.47M9.35 6.60L9.35 0.90L6.65 0.90L6.65 6.60M9.89 8.47L14.82 5.62L13.47 3.28L8.54 6.13M8.54 9.87L13.47 12.72L14.82 10.38L9.89 7.53" stroke="#1259b0" stroke-width="1.15" fill="none" stroke-linejoin="round"/></svg>
<span class="t" style="top:830px;line-height:14px;font-size:12px;color:#154fa6;left:59px;">0</span>
<span class="t" style="top:830px;line-height:14px;font-size:12px;color:#154fa6;letter-spacing:-0.243px;left:79px;">Počet záznamů: 75/624</span>
<div style="left:861px;top:826px;width:1px;height:22px;background:#d0d0d0;"></div>
<div style="left:887px;top:826px;width:1px;height:22px;background:#d0d0d0;"></div>
<svg style="left:868px;top:830px;" width="12" height="14" viewBox="0 0 12 14"><path d="M10.8 2.4V0.8H1.2L6.6 7L1.2 13.2H10.8V11.6" stroke="#1259b0" stroke-width="1.4" fill="none" stroke-linejoin="miter"/></svg>
<svg style="left:893px;top:829px;" width="16" height="16" viewBox="0 0 16 16"><path d="M1.2 13.2L2.4 9.4L10.6 1.2C11.4 0.4 12.2 0.6 13 1.4C13.8 2.2 14 3 13.2 3.8L5 12Z M9.4 2.4L12 5" stroke="#1259b0" stroke-width="1.2" fill="none" stroke-linejoin="round"/><path d="M7.6 14.6H14.4" stroke="#1259b0" stroke-width="1.2"/></svg>
<svg style="left:914px;top:827.6px" width="20.46" height="18.60" viewBox="0 0 22 20"><g stroke="#1259b0" stroke-width="1.4" fill="none"><path d="M1 12.6V1H13.6V2.8"/><rect x="3.6" y="3.6" width="13.4" height="12.6" fill="#f0f0f0"/><path d="M3.6 7H17 M7 7V16.2 M7 10H13 M7 13H12" stroke-width="1.2"/></g><circle cx="16.4" cy="15" r="4.4" fill="#f0f0f0" stroke="#1259b0" stroke-width="1.3"/><path d="M14.2 15H18.6M16.4 12.8V17.2" stroke="#1259b0" stroke-width="1.3"/></svg>
<div style="left:941px;top:133px;width:7px;height:717px;background:#00adee;"></div>
<svg style="left:941px;top:478px;" width="7" height="26" viewBox="0 0 7 26"><g fill="#4ecbfa"><circle cx="3.6" cy="4" r="1.7"/><circle cx="3.6" cy="13" r="1.7"/><circle cx="3.6" cy="22" r="1.7"/></g></svg>
<div style="left:951px;top:133px;width:398px;height:717px;background:#f0f0f0;border:1px solid #cdcdcd;border-top:none;box-sizing:border-box;"></div>
<div style="left:951px;top:133px;width:398px;height:25px;background:#00adee;"></div>
<span class="t" style="top:138px;line-height:16px;font-size:14px;color:#fff;font-weight:bold;transform:scaleX(0.8934);transform-origin:0 0;left:956px;">Filtrace</span>
<div style="left:1324px;top:135px;width:1px;height:21px;background:#0a8cc4;"></div>
<svg style="left:1329px;top:141px;" width="16" height="9" viewBox="0 0 16 9"><path d="M1.2 7.8L7.6 1.6L14 7.8" stroke="#fff" stroke-width="1.3" fill="none"/></svg>
<div style="left:959px;top:182px;width:17px;height:17px;background:#ffffe1;border:1px solid #1050a5;box-sizing:border-box;"></div>
<span class="t" style="top:184px;line-height:14px;font-size:12px;color:#154fa6;transform:scaleX(0.9066);transform-origin:0 0;left:982px;">Třída</span>
<div style="left:959px;top:226px;width:17px;height:17px;background:#ffffe1;border:1px solid #1050a5;box-sizing:border-box;"></div>
<span class="t" style="top:228px;line-height:14px;font-size:12px;color:#154fa6;letter-spacing:0.028px;left:982px;">Kontext</span>
<div style="left:959px;top:270px;width:17px;height:17px;background:#ffffe1;border:1px solid #1050a5;box-sizing:border-box;"></div>
<span class="t" style="top:272px;line-height:14px;font-size:12px;color:#154fa6;letter-spacing:-0.223px;left:982px;">Uživatel</span>
<div style="left:959px;top:314px;width:17px;height:17px;background:#ffffe1;border:1px solid #1050a5;box-sizing:border-box;"></div>
<span class="t" style="top:316px;line-height:14px;font-size:12px;color:#154fa6;letter-spacing:0.171px;left:982px;">Mandant</span>
<div style="left:959px;top:358px;width:17px;height:17px;background:#ffffe1;border:1px solid #1050a5;box-sizing:border-box;"></div>
<span class="t" style="top:360px;line-height:14px;font-size:12px;color:#154fa6;letter-spacing:0.314px;left:982px;">Multicompany</span>
<div style="left:959px;top:416px;width:17px;height:17px;background:#ffffe1;border:1px solid #1050a5;box-sizing:border-box;"></div>
<span class="t" style="top:418px;line-height:14px;font-size:12px;color:#154fa6;letter-spacing:-0.131px;left:982px;">Úroveň</span>
<div style="left:959px;top:489px;width:17px;height:17px;background:#ffffe1;border:1px solid #1050a5;box-sizing:border-box;"></div>
<span class="t" style="top:491px;line-height:14px;font-size:12px;color:#154fa6;letter-spacing:-0.219px;left:982px;">Poslední změna</span>
<span class="t" style="top:165px;line-height:14px;font-size:12px;color:#154fa6;transform:scaleX(0.9066);transform-origin:0 0;left:1096px;">Třída</span>
<div style="left:1089px;top:179px;width:253px;height:23px;background:#ffffe1;border:1px solid #00a3f0;box-sizing:border-box;"></div>
<svg style="left:1324px;top:188px;" width="14" height="5" viewBox="0 0 14 5"><g fill="#1e55a5"><rect x="1.3" y="1.8" width="1.5" height="1.4"/><rect x="6" y="1.8" width="1.5" height="1.4"/><rect x="10.6" y="1.8" width="1.5" height="1.4"/></g></svg>
<span class="t" style="top:209px;line-height:14px;font-size:12px;color:#154fa6;letter-spacing:0.119px;left:1096px;">Datový modul</span>
<span class="t" style="top:209px;line-height:14px;font-size:12px;color:#154fa6;letter-spacing:0.028px;left:1226px;">Kontext</span>
<div style="left:1089px;top:223px;width:124px;height:23px;background:#ffffe1;border:1px solid #00a3f0;box-sizing:border-box;"></div>
<svg style="left:1195px;top:230px;" width="13" height="10" viewBox="0 0 13 10"><g fill="none" stroke="#1e55a5" stroke-width="0.9"><rect x="0.6" y="0.5" width="2.2" height="2"/><rect x="5.1" y="0.5" width="2.2" height="2"/><rect x="9.6" y="0.5" width="2.2" height="2"/><path d="M0.8 4.6L6.2 8.8L11.6 4.6" stroke-width="1.1"/></g></svg>
<div style="left:1219px;top:223px;width:123px;height:23px;background:#ffffe1;border:1px solid #00a3f0;box-sizing:border-box;"></div>
<span class="t" style="top:253px;line-height:14px;font-size:12px;color:#154fa6;letter-spacing:-0.223px;left:1096px;">Uživatel</span>
<div style="left:1089px;top:267px;width:253px;height:23px;background:#ffffe1;border:1px solid #00a3f0;box-sizing:border-box;"></div>
<svg style="left:1324px;top:274px;" width="13" height="10" viewBox="0 0 13 10"><g fill="none" stroke="#1e55a5" stroke-width="0.9"><rect x="0.6" y="0.5" width="2.2" height="2"/><rect x="5.1" y="0.5" width="2.2" height="2"/><rect x="9.6" y="0.5" width="2.2" height="2"/><path d="M0.8 4.6L6.2 8.8L11.6 4.6" stroke-width="1.1"/></g></svg>
<span class="t" style="top:297px;line-height:14px;font-size:12px;color:#154fa6;letter-spacing:0.171px;left:1096px;">Mandant</span>
<div style="left:1089px;top:311px;width:253px;height:23px;background:#ffffe1;border:1px solid #00a3f0;box-sizing:border-box;"></div>
<svg style="left:1324px;top:318px;" width="13" height="10" viewBox="0 0 13 10"><g fill="none" stroke="#1e55a5" stroke-width="0.9"><rect x="0.6" y="0.5" width="2.2" height="2"/><rect x="5.1" y="0.5" width="2.2" height="2"/><rect x="9.6" y="0.5" width="2.2" height="2"/><path d="M0.8 4.6L6.2 8.8L11.6 4.6" stroke-width="1.1"/></g></svg>
<span class="t" style="top:341px;line-height:14px;font-size:12px;color:#154fa6;letter-spacing:0.314px;left:1096px;">Multicompany</span>
<div style="left:1089px;top:355px;width:253px;height:23px;background:#ffffe1;border:1px solid #00a3f0;box-sizing:border-box;"></div>
<svg style="left:1324px;top:362px;" width="13" height="10" viewBox="0 0 13 10"><g fill="none" stroke="#1e55a5" stroke-width="0.9"><rect x="0.6" y="0.5" width="2.2" height="2"/><rect x="5.1" y="0.5" width="2.2" height="2"/><rect x="9.6" y="0.5" width="2.2" height="2"/><path d="M0.8 4.6L6.2 8.8L11.6 4.6" stroke-width="1.1"/></g></svg>
<div style="left:1090px;top:387px;width:17px;height:17px;background:#0050a4;"></div>
<svg style="left:1090px;top:387px;" width="17" height="17" viewBox="0 0 17 17"><path d="M3.6 8.6L7 11.8L13.4 5.4" stroke="#ffffe1" stroke-width="1.9" fill="none"/></svg>
<span class="t" style="top:389px;line-height:14px;font-size:12px;color:#154fa6;letter-spacing:-0.123px;left:1113px;">Tovární</span>
<div style="left:1220px;top:387px;width:17px;height:17px;background:#0050a4;"></div>
<svg style="left:1220px;top:387px;" width="17" height="17" viewBox="0 0 17 17"><path d="M3.6 8.6L7 11.8L13.4 5.4" stroke="#ffffe1" stroke-width="1.9" fill="none"/></svg>
<span class="t" style="top:389px;line-height:14px;font-size:12px;color:#154fa6;letter-spacing:-0.113px;left:1243px;">Globální</span>
<div style="left:1090px;top:416px;width:17px;height:17px;background:#0050a4;"></div>
<svg style="left:1090px;top:416px;" width="17" height="17" viewBox="0 0 17 17"><path d="M3.6 8.6L7 11.8L13.4 5.4" stroke="#ffffe1" stroke-width="1.9" fill="none"/></svg>
<span class="t" style="top:418px;line-height:14px;font-size:12px;color:#154fa6;letter-spacing:0.171px;left:1113px;">Mandant</span>
<div style="left:1220px;top:416px;width:17px;height:17px;background:#0050a4;"></div>
<svg style="left:1220px;top:416px;" width="17" height="17" viewBox="0 0 17 17"><path d="M3.6 8.6L7 11.8L13.4 5.4" stroke="#ffffe1" stroke-width="1.9" fill="none"/></svg>
<span class="t" style="top:418px;line-height:14px;font-size:12px;color:#154fa6;letter-spacing:-0.282px;left:1243px;">Skupina</span>
<div style="left:1090px;top:445px;width:17px;height:17px;background:#0050a4;"></div>
<svg style="left:1090px;top:445px;" width="17" height="17" viewBox="0 0 17 17"><path d="M3.6 8.6L7 11.8L13.4 5.4" stroke="#ffffe1" stroke-width="1.9" fill="none"/></svg>
<span class="t" style="top:447px;line-height:14px;font-size:12px;color:#154fa6;letter-spacing:-0.223px;left:1113px;">Uživatel</span>
<div style="left:1220px;top:445px;width:17px;height:17px;background:#0050a4;"></div>
<svg style="left:1220px;top:445px;" width="17" height="17" viewBox="0 0 17 17"><path d="M3.6 8.6L7 11.8L13.4 5.4" stroke="#ffffe1" stroke-width="1.9" fill="none"/></svg>
<span class="t" style="top:447px;line-height:14px;font-size:12px;color:#154fa6;letter-spacing:0.314px;left:1243px;">Multicompany</span>
<span class="t" style="top:472px;line-height:14px;font-size:12px;color:#154fa6;letter-spacing:-0.190px;left:1096px;">Poslední změna od</span>
<span class="t" style="top:472px;line-height:14px;font-size:12px;color:#154fa6;letter-spacing:-0.167px;left:1226px;">Poslední změna do</span>
<div style="left:1089px;top:486px;width:124px;height:23px;background:#ffffe1;border:1px solid #00a3f0;box-sizing:border-box;"></div>
<div style="left:1219px;top:486px;width:123px;height:23px;background:#ffffe1;border:1px solid #00a3f0;box-sizing:border-box;"></div>
<span class="t" style="top:492px;line-height:14px;font-size:12.5px;color:#000;letter-spacing:-0.112px;left:1092px;">00.00.0000 00:00:</span>
<span class="t" style="top:492px;line-height:14px;font-size:12.5px;color:#000;letter-spacing:-0.058px;left:1222px;">28.09.2023 00:00</span>
<svg style="left:1194.6px;top:490.2px;" width="14" height="14" viewBox="0 0 14 14"><rect x="0.8" y="1.4" width="12.2" height="12" rx="1.4" fill="#f6f8fb" stroke="#4f80be" stroke-width="1.1"/><rect x="1.3" y="1.9" width="11.2" height="2.3" fill="#8db0dd"/><rect x="3.3" y="0.5" width="1.2" height="2.3" fill="#2c60a8"/><rect x="9.3" y="0.5" width="1.2" height="2.3" fill="#2c60a8"/><g fill="#2c5a9f"><rect x="5.2" y="6.1" width="1.2" height="1.2"/><rect x="7.3" y="6.1" width="1.2" height="1.2"/><rect x="9.4" y="6.1" width="1.2" height="1.2"/><rect x="3.1" y="8.2" width="1.2" height="1.2"/><rect x="5.2" y="8.2" width="1.2" height="1.2"/><rect x="7.3" y="8.2" width="1.2" height="1.2"/><rect x="9.4" y="8.2" width="1.2" height="1.2"/><rect x="3.1" y="10.3" width="1.2" height="1.2"/><rect x="5.2" y="10.3" width="1.2" height="1.2"/><rect x="7.3" y="10.3" width="1.2" height="1.2"/></g></svg>
<svg style="left:1323.6px;top:490.2px;" width="14" height="14" viewBox="0 0 14 14"><rect x="0.8" y="1.4" width="12.2" height="12" rx="1.4" fill="#f6f8fb" stroke="#4f80be" stroke-width="1.1"/><rect x="1.3" y="1.9" width="11.2" height="2.3" fill="#8db0dd"/><rect x="3.3" y="0.5" width="1.2" height="2.3" fill="#2c60a8"/><rect x="9.3" y="0.5" width="1.2" height="2.3" fill="#2c60a8"/><g fill="#2c5a9f"><rect x="5.2" y="6.1" width="1.2" height="1.2"/><rect x="7.3" y="6.1" width="1.2" height="1.2"/><rect x="9.4" y="6.1" width="1.2" height="1.2"/><rect x="3.1" y="8.2" width="1.2" height="1.2"/><rect x="5.2" y="8.2" width="1.2" height="1.2"/><rect x="7.3" y="8.2" width="1.2" height="1.2"/><rect x="9.4" y="8.2" width="1.2" height="1.2"/><rect x="3.1" y="10.3" width="1.2" height="1.2"/><rect x="5.2" y="10.3" width="1.2" height="1.2"/><rect x="7.3" y="10.3" width="1.2" height="1.2"/></g></svg>
<div style="left:958px;top:515px;width:384px;height:25px;background:#00adee;"></div>
<svg style="left:963px;top:521px;" width="18" height="18" viewBox="0 0 18 18"><g stroke="#fff" stroke-width="1.4" fill="none" stroke-linejoin="round"><path d="M8 2.6C6.5 1.2 3 1 1 1.6V12.4C3 11.8 6.5 12 8 13.2C9.5 12 13 11.8 15 12.4V1.6C13 1 9.5 1.2 8 2.6V13.2"/></g><path d="M12.2 14L17 14L14.6 16.4Z" fill="#fff"/></svg>
<span class="t" style="top:520px;line-height:16px;font-size:14px;color:#fff;font-weight:bold;transform:scaleX(0.9042);transform-origin:0 0;left:986px;">Třídy určené k přenosu</span>
<div style="left:1131px;top:517px;width:182px;height:21px;background:#ffffe1;"></div>
<span class="t" style="top:521px;line-height:15px;font-size:13px;color:#8a8a8a;font-style:italic;letter-spacing:-0.196px;left:1133px;">Hledat</span>
<svg style="left:1297px;top:521px;" width="12" height="14" viewBox="0 0 12 14"><path d="M0.9 1.7H10.3L6.8 6.3V10L4.6 12.1V6.3Z M4.6 6.3H6.8" stroke="#0f50a8" stroke-width="1.2" fill="none" stroke-linejoin="miter"/></svg>
<div style="left:1317px;top:517px;width:1px;height:21px;background:#0a86bd;"></div>
<svg style="left:1320px;top:521px;" width="20" height="14" viewBox="0 0 20 14"><path d="M0 1.3H19.2M0 6.6H19.2M0 11.9H19.2" stroke="#fff" stroke-opacity="0.92" stroke-width="1.5" fill="none"/></svg>
<div style="left:958px;top:540px;width:384px;height:198px;background:#fff;"></div>
<div style="left:958px;top:540px;width:364px;height:21px;background:#f0f0f0;"></div>
<span class="t" style="top:544px;line-height:14px;font-size:12px;color:#154fa6;left:822px;width:300px;text-align:center;">s</span>
<span class="t" style="top:544px;line-height:14px;font-size:12px;color:#154fa6;transform:scaleX(0.9066);transform-origin:0 0;left:993px;">Třída</span>
<span class="t" style="top:544px;line-height:14px;font-size:12px;color:#154fa6;transform:scaleX(0.9260);transform-origin:0 0;left:1160px;">Název</span>
<div style="left:958px;top:562px;width:364px;height:21px;background:#e1e1e1;"></div>
<div style="left:958px;top:561px;width:364px;height:1px;background:#d5d5d5;"></div>
<div style="left:958px;top:583px;width:364px;height:1px;background:#d5d5d5;"></div>
<div style="left:958px;top:605px;width:364px;height:1px;background:#d5d5d5;"></div>
<div style="left:958px;top:627px;width:364px;height:1px;background:#d5d5d5;"></div>
<div style="left:958px;top:649px;width:364px;height:1px;background:#d5d5d5;"></div>
<div style="left:958px;top:671px;width:364px;height:1px;background:#d5d5d5;"></div>
<div style="left:958px;top:693px;width:364px;height:1px;background:#d5d5d5;"></div>
<div style="left:958px;top:715px;width:364px;height:1px;background:#d5d5d5;"></div>
<div style="left:958px;top:737px;width:364px;height:1px;background:#d5d5d5;"></div>
<div style="left:958px;top:540px;width:1px;height:198px;background:#d5d5d5;"></div>
<div style="left:986px;top:540px;width:1px;height:198px;background:#d5d5d5;"></div>
<div style="left:1153px;top:540px;width:1px;height:198px;background:#d5d5d5;"></div>
<div style="left:1321px;top:540px;width:1px;height:198px;background:#d5d5d5;"></div>
<svg style="left:964.5px;top:564.6px;" width="16" height="16" viewBox="0 0 16 16"><path d="M8.00 14.80L8.00 1.20M2.11 11.40L13.89 4.60M2.11 4.60L13.89 11.40" stroke="#ffa633" stroke-width="3.1" fill="none"/></svg>
<span class="t" style="top:567px;line-height:14px;font-size:12.5px;color:#000;letter-spacing:0.090px;left:992.5px;">TGoodsAssistantConfigur...</span>
<span class="t" style="top:567px;line-height:14px;font-size:12.5px;color:#000;letter-spacing:0.280px;left:1160px;">Asistent pro zboží</span>
<svg style="left:964.5px;top:586.6px;" width="16" height="16" viewBox="0 0 16 16"><path d="M8.00 14.80L8.00 1.20M2.11 11.40L13.89 4.60M2.11 4.60L13.89 11.40" stroke="#ffa633" stroke-width="3.1" fill="none"/></svg>
<span class="t" style="top:589px;line-height:14px;font-size:12.5px;color:#000;letter-spacing:-0.027px;left:992.5px;">TBShortcutGroupF9</span>
<span class="t" style="top:589px;line-height:14px;font-size:12.5px;color:#000;transform:scaleX(0.9481);transform-origin:0 0;left:1160px;">Dávka</span>
<svg style="left:964.5px;top:608.6px;" width="16" height="16" viewBox="0 0 16 16"><path d="M8.00 14.80L8.00 1.20M2.11 11.40L13.89 4.60M2.11 4.60L13.89 11.40" stroke="#ffa633" stroke-width="3.1" fill="none"/></svg>
<span class="t" style="top:611px;line-height:14px;font-size:12.5px;color:#000;letter-spacing:0.036px;left:992.5px;">TInternetCalendarGenera...</span>
<span class="t" style="top:611px;line-height:14px;font-size:12.5px;color:#000;letter-spacing:0.161px;left:1160px;">Definice generování inter...</span>
<svg style="left:964.5px;top:630.6px;" width="16" height="16" viewBox="0 0 16 16"><path d="M8.00 14.80L8.00 1.20M2.11 11.40L13.89 4.60M2.11 4.60L13.89 11.40" stroke="#ffa633" stroke-width="3.1" fill="none"/></svg>
<span class="t" style="top:633px;line-height:14px;font-size:12.5px;color:#000;letter-spacing:-0.259px;left:992.5px;">TxFilter</span>
<span class="t" style="top:633px;line-height:14px;font-size:12.5px;color:#000;letter-spacing:-0.206px;left:1160px;">Filtr</span>
<svg style="left:964.5px;top:652.6px;" width="16" height="16" viewBox="0 0 16 16"><path d="M8.00 14.80L8.00 1.20M2.11 11.40L13.89 4.60M2.11 4.60L13.89 11.40" stroke="#ffa633" stroke-width="3.1" fill="none"/></svg>
<span class="t" style="top:655px;line-height:14px;font-size:12.5px;color:#000;letter-spacing:0.133px;left:992.5px;">TNewTransferNoteConfig...</span>
<span class="t" style="top:655px;line-height:14px;font-size:12.5px;color:#000;letter-spacing:0.235px;left:1160px;">Konfigurace - Převodka</span>
<svg style="left:964.5px;top:674.6px;" width="16" height="16" viewBox="0 0 16 16"><path d="M8.00 14.80L8.00 1.20M2.11 11.40L13.89 4.60M2.11 4.60L13.89 11.40" stroke="#ffa633" stroke-width="3.1" fill="none"/></svg>
<span class="t" style="top:677px;line-height:14px;font-size:12.5px;color:#000;letter-spacing:0.097px;left:992.5px;">TNewReleaseNoteConfig...</span>
<span class="t" style="top:677px;line-height:14px;font-size:12.5px;color:#000;letter-spacing:0.210px;left:1160px;">Konfigurace - Výdejka</span>
<svg style="left:964.5px;top:696.6px;" width="16" height="16" viewBox="0 0 16 16"><path d="M8.00 14.80L8.00 1.20M2.11 11.40L13.89 4.60M2.11 4.60L13.89 11.40" stroke="#ffa633" stroke-width="3.1" fill="none"/></svg>
<span class="t" style="top:699px;line-height:14px;font-size:12.5px;color:#000;letter-spacing:0.143px;left:992.5px;">TReminderConfigurationI...</span>
<span class="t" style="top:699px;line-height:14px;font-size:12.5px;color:#000;letter-spacing:0.238px;left:1160px;">Konfigurace parametrů u...</span>
<svg style="left:964.5px;top:718.6px;" width="16" height="16" viewBox="0 0 16 16"><path d="M8.00 14.80L8.00 1.20M2.11 11.40L13.89 4.60M2.11 4.60L13.89 11.40" stroke="#ffa633" stroke-width="3.1" fill="none"/></svg>
<span class="t" style="top:721px;line-height:14px;font-size:12.5px;color:#000;letter-spacing:-0.054px;left:992.5px;">TCrossCompanyTransacti...</span>
<span class="t" style="top:721px;line-height:14px;font-size:12.5px;color:#000;letter-spacing:0.168px;left:1160px;">Konfigurace přenesení d...</span>
<div style="left:1325px;top:540px;width:16px;height:198px;background:#f0f0f0;"></div>
<div style="left:1341px;top:540px;width:1px;height:198px;background:#d0d0d0;"></div>
<svg style="left:1327px;top:545px;" width="10" height="8" viewBox="0 0 10 8"><path d="M1.5 6.4L5 2.9L8.5 6.4" stroke="#505050" stroke-width="2.1" fill="none"/></svg>
<svg style="left:1327px;top:726.5px;" width="10" height="8" viewBox="0 0 10 8"><path d="M1.5 1.6L5 5.1L8.5 1.6" stroke="#505050" stroke-width="2.1" fill="none"/></svg>
<div style="left:1325px;top:560px;width:15px;height:17px;background:#cdcdcd;"></div>
<div style="left:958px;top:738px;width:384px;height:27px;background:#f0f0f0;border:1px solid #d0d0d0;border-top:none;box-sizing:border-box;"></div>
<div style="left:959px;top:740px;width:23px;height:23px;background:#d2d2d2;border:2px solid #7a7a7a;box-sizing:border-box;"></div>
<svg style="left:962.4px;top:744.6px;" width="18" height="18" viewBox="0 0 18 18"><g stroke="#1259b0" stroke-width="1.4" fill="none" stroke-linejoin="round"><path d="M8 2.6C6.5 1.2 3 1 1 1.6V12.4C3 11.8 6.5 12 8 13.2C9.5 12 13 11.8 15 12.4V1.6C13 1 9.5 1.2 8 2.6V13.2"/></g></svg>
<div style="left:983px;top:741px;width:1px;height:22px;background:#d0d0d0;"></div>
<svg style="left:988.5px;top:743.4px;" width="16" height="16" viewBox="0 0 16 16"><path d="M8.00 15.50L8.00 0.50M1.50 11.75L14.50 4.25M1.50 4.25L14.50 11.75" stroke="#0050a4" stroke-width="3.3" fill="none"/></svg>
<span class="t" style="top:745px;line-height:14px;font-size:12px;color:#154fa6;transform:scaleX(0.9207);transform-origin:0 0;left:1013px;">50</span>
<div style="left:1032px;top:741px;width:1px;height:22px;background:#d0d0d0;"></div>
<span class="t" style="top:745px;line-height:14px;font-size:12px;color:#154fa6;letter-spacing:-0.249px;left:1039px;">Počet záznamů: 1/50</span>
<div style="left:1265px;top:741px;width:1px;height:22px;background:#d0d0d0;"></div>
<div style="left:1291px;top:741px;width:1px;height:22px;background:#d0d0d0;"></div>
<svg style="left:1272.6px;top:745px;" width="12" height="14" viewBox="0 0 12 14"><path d="M10.8 2.4V0.8H1.2L6.6 7L1.2 13.2H10.8V11.6" stroke="#1259b0" stroke-width="1.4" fill="none" stroke-linejoin="miter"/></svg>
<svg style="left:1297.2px;top:744px;" width="16" height="16" viewBox="0 0 16 16"><path d="M1.2 13.2L2.4 9.4L10.6 1.2C11.4 0.4 12.2 0.6 13 1.4C13.8 2.2 14 3 13.2 3.8L5 12Z M9.4 2.4L12 5" stroke="#c8c8c8" stroke-width="1.2" fill="none" stroke-linejoin="round"/><path d="M7.6 14.6H14.4" stroke="#c8c8c8" stroke-width="1.2"/></svg>
<svg style="left:1318.4px;top:741.9px" width="20.46" height="18.60" viewBox="0 0 22 20"><g stroke="#1259b0" stroke-width="1.4" fill="none"><path d="M1 12.6V1H13.6V2.8"/><rect x="3.6" y="3.6" width="13.4" height="12.6" fill="#f0f0f0"/><path d="M3.6 7H17 M7 7V16.2 M7 10H13 M7 13H12" stroke-width="1.2"/></g><circle cx="16.4" cy="15" r="4.4" fill="#f0f0f0" stroke="#1259b0" stroke-width="1.3"/><path d="M14.2 15H18.6M16.4 12.8V17.2" stroke="#1259b0" stroke-width="1.3"/></svg>
<div style="left:958px;top:771px;width:384px;height:40px;background:#00adee;"></div>
<svg style="left:966px;top:778px;" width="24" height="28" viewBox="0 0 24 28"><path d="M1.6 1.9H22.4L14.5 12.4V19.4L9.5 24.6V12.4Z M9.5 12.4H14.5" stroke="#fff" stroke-width="1.9" fill="none" stroke-linejoin="miter"/></svg>
<span class="t" style="top:784px;line-height:14px;font-size:12px;color:#fff;left:1019px;width:300px;text-align:center;">Filtrovat</span>
<div style="left:958px;top:817px;width:384px;height:23px;background:#00adee;"></div>
<span class="t" style="top:822px;line-height:14px;font-size:12px;color:#fff;left:1000px;width:300px;text-align:center;">Výchozí</span>
</body></html>
